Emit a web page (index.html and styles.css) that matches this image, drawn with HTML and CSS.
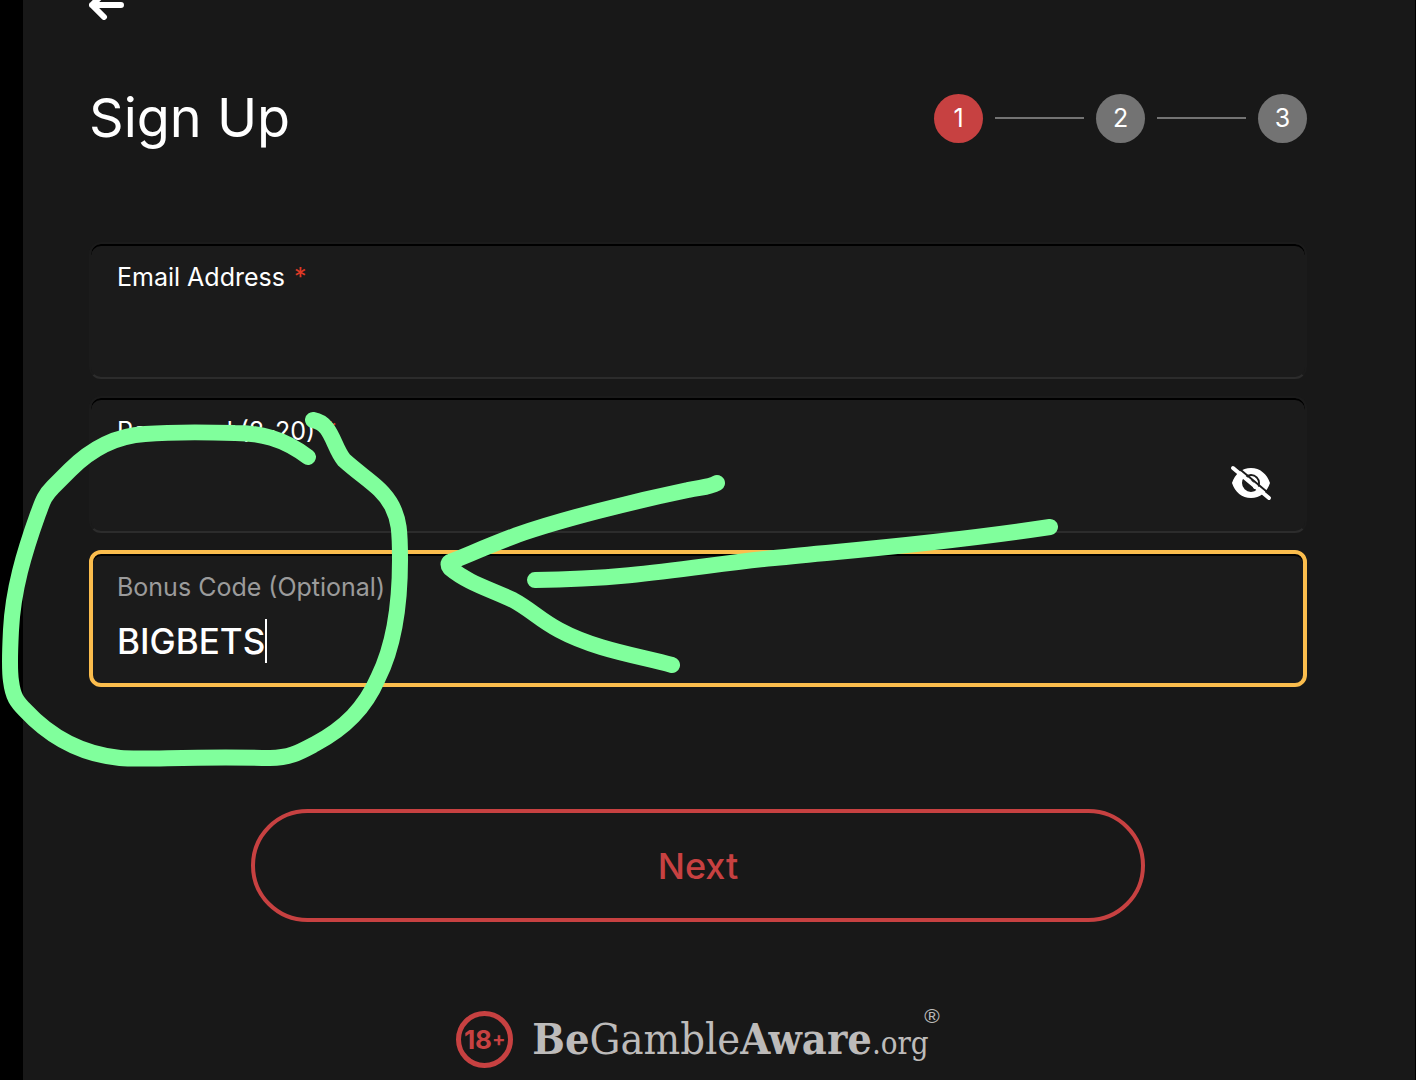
FILE: index.html
```html
<!DOCTYPE html>
<html lang="en">
<head>
<meta charset="utf-8">
<meta name="viewport" content="width=device-width, initial-scale=1">
<title>Sign Up</title>
<link rel="stylesheet" href="styles.css">
</head>
<body>
<main class="panel">
  <button class="back" type="button" aria-label="Back">
    <svg class="back-icon" viewBox="0 0 36 20" aria-hidden="true"><path d="M32 5H3M16 -8L3 5L15 17"/></svg>
  </button>

  <header class="header">
    <h1 class="title">Sign Up</h1>
    <ol class="steps">
      <li class="step step-current" aria-current="step">1</li>
      <li class="step-line" role="presentation"></li>
      <li class="step">2</li>
      <li class="step-line" role="presentation"></li>
      <li class="step">3</li>
    </ol>
  </header>

  <form class="form">
    <div class="field">
      <label class="label" for="email">Email Address <span class="required">*</span></label>
      <input class="input" id="email" type="email">
    </div>
    <div class="field">
      <label class="label" for="password">Password (8-20) <span class="required">*</span></label>
      <div class="input-row">
        <input class="input" id="password" type="password">
      </div>
      <button class="reveal" type="button" aria-label="Show password">
        <svg class="reveal-icon" viewBox="0 0 42 36" aria-hidden="true">
          <path class="eye" fill-rule="evenodd" d="M2 18C5 9 12 3 21 3S37 9 40 18C37 27 30 33 21 33S5 27 2 18ZM21 9A9 9 0 1 0 21 27A9 9 0 1 0 21 9Z"/>
          <path class="pupil" d="M19 14C24 11 28 17 25 22"/>
          <path class="slash-gap" d="M6 1L42 31"/>
          <path class="slash" d="M3 3L39 33"/>
        </svg>
      </button>
    </div>
    <div class="field field-focus">
      <label class="label label-muted" for="bonus">Bonus Code (Optional)</label>
      <div class="input-row">
        <input class="input input-fit" id="bonus" type="text" value="BIGBETS" size="7">
        <span class="caret"></span>
      </div>
    </div>
    <button class="next" type="button">Next</button>
  </form>

  <footer class="footer">
    <span class="age">18<span class="age-plus">+</span></span>
    <a class="aware" href="#"><b>Be</b>Gamble<b>Aware</b><span class="aware-org">.org</span><span class="aware-mark">®</span></a>
  </footer>
</main>

<svg class="marker" width="1070" height="780" viewBox="0 0 1070 780" aria-hidden="true">
  <path d="M308 457C283 438 260 433 235 433C200 432 170 432 145 434C112 436 88 452 70 470L53 487C43 497 42 504 38 514C24 553 13 590 11 630C10 650 9 668 11 681C13 697 17 702 25 710C50 737 80 754 120 758C145 760 190 756 270 758C290 758 300 752 315 744C345 728 365 708 378 678C393 648 400 610 400 560C400 530 399 520 392 506C382 487 365 479 344 460C333 447 332 423 313 420"/>
  <path d="M717 483C708 488 700 487 688 490C630 502 560 520 517 535C488 546 470 554 450 562Q447 564 450 568C468 583 490 589 513 600C530 609 540 620 559 630C596 650 640 656 672 665"/>
  <path d="M535 580C640 579 700 565 774 558C850 550 930 545 1050 527"/>
</svg>
</body>
</html>
```

FILE: styles.css
```css
* {
  box-sizing: border-box;
}

body {
  margin: 0;
  background: #000;
  color: #fff;
  font-family: Inter, "Liberation Sans", sans-serif;
  position: relative;
}

button,
input {
  font: inherit;
  color: inherit;
}

.panel {
  display: flex;
  flex-direction: column;
  min-height: 100vh;
  margin: 0 1px 0 23px;
  padding: 0 108px 12px 66px;
  background: #181818;
}

.back {
  align-self: flex-start;
  padding: 0;
  border: 0;
  background: none;
}

.back-icon {
  display: block;
  width: 36px;
  height: 20px;
  fill: none;
  stroke: #fff;
  stroke-width: 6;
  stroke-linecap: round;
  stroke-linejoin: round;
}

.header {
  display: flex;
  align-items: center;
  justify-content: space-between;
  margin: 64px 0 90px;
}

.title {
  margin: 0;
  font-size: 54px;
  line-height: 68px;
  font-weight: 400;
}

.steps {
  display: flex;
  align-items: center;
  gap: 12px;
  margin: 0;
  padding: 0;
  list-style: none;
}

.step {
  width: 49px;
  height: 49px;
  border-radius: 50%;
  background: #737373;
  font-size: 25px;
  line-height: 49px;
  text-align: center;
}

.step-current {
  background: #c74141;
}

.step-line {
  width: 89px;
  height: 2px;
  background: #737373;
}

.form {
  display: flex;
  flex-direction: column;
  gap: 17px;
}

.field {
  position: relative;
  height: 137px;
  padding: 17px 26px;
  border: 2px solid #1b1b1b;
  border-bottom-color: #2c2c2c;
  border-radius: 12px;
  background: #1b1b1b;
  box-shadow: inset 0 2px #000;
}

.field-focus {
  padding: 17px 24px;
  border: 4px solid #fbbd4d;
}

.label {
  display: block;
  font-size: 25px;
  line-height: 32px;
}

.label-muted {
  color: #9b9b9b;
}

.required {
  margin-left: 2px;
  color: #e03a26;
}

.input-row {
  display: flex;
  align-items: center;
  margin-top: 16px;
}

.input {
  width: 100%;
  height: 44px;
  padding: 0;
  border: 0;
  outline: 0;
  background: transparent;
  font-size: 35px;
  font-weight: 500;
}

.input-fit {
  width: auto;
  field-sizing: content;
}

.caret {
  width: 2px;
  height: 44px;
  background: #fff;
}

.reveal {
  position: absolute;
  top: 50%;
  right: 33px;
  padding: 0;
  border: 0;
  background: none;
}

.reveal-icon {
  display: block;
  width: 42px;
  height: 36px;
  fill: none;
}

.eye {
  fill: #fff;
}

.pupil,
.slash,
.slash-gap {
  stroke: #fff;
  stroke-width: 4;
  stroke-linecap: round;
}

.slash-gap {
  stroke: #1b1b1b;
  stroke-width: 2;
}

.next {
  align-self: center;
  width: 894px;
  max-width: 100%;
  height: 113px;
  margin-top: 105px;
  border: 4px solid #c74141;
  border-radius: 57px;
  background: none;
  color: #c74141;
  font-size: 36px;
  font-weight: 500;
}

.footer {
  display: flex;
  align-items: center;
  justify-content: center;
  gap: 19px;
  margin-top: 84px;
}

.age {
  display: flex;
  align-items: center;
  justify-content: center;
  width: 57px;
  height: 57px;
  border: 5px solid #c74141;
  border-radius: 50%;
  color: #c74141;
  font-size: 26px;
  font-weight: 700;
}

.age-plus {
  font-size: 20px;
}

.aware {
  position: relative;
  padding: 5px 11px 0 0;
  color: #bdbbba;
  font-family: "DejaVu Serif Condensed", "DejaVu Serif", serif;
  font-size: 43px;
  line-height: 57px;
  text-decoration: none;
  white-space: nowrap;
}

.aware-org {
  font-size: 31px;
}

.aware-mark {
  position: absolute;
  top: 0;
  right: 0;
  font-family: "Liberation Sans", sans-serif;
  font-size: 21px;
  line-height: 20px;
}

.marker {
  position: absolute;
  top: 0;
  left: 0;
  fill: none;
  stroke: #80ff9c;
  stroke-width: 16;
  stroke-linecap: round;
  stroke-linejoin: round;
  pointer-events: none;
}
```
